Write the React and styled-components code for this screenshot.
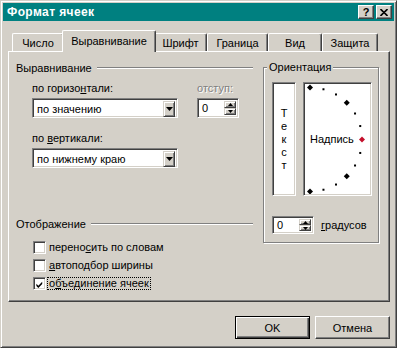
import styled, { createGlobalStyle } from "styled-components";

const GlobalStyle = createGlobalStyle`
  html, body {
    margin: 0;
    padding: 0;
    background: #d4d0c8;
  }
  body {
    font-family: "Liberation Sans", Arial, sans-serif;
    font-size: 11px;
    color: #000000;
  }
  * {
    box-sizing: border-box;
  }
`;

const Window = styled.div`
  width: 397px;
  height: 348px;
  background: #d4d0c8;
  border: 1px solid;
  border-color: #d4d0c8 #404040 #404040 #d4d0c8;
  box-shadow: inset 1px 1px #ffffff, inset -1px -1px #808080;
  padding: 2px;
  display: flex;
  flex-direction: column;
`;

const TitleBar = styled.div`
  height: 18px;
  background: #008080;
  display: flex;
  align-items: center;
  padding: 0 2px 0 4px;
`;

const TitleText = styled.span`
  color: #ffffff;
  font-weight: 700;
  font-size: 12px;
  letter-spacing: 0.4px;
`;

const TitleButtons = styled.div`
  margin-left: auto;
  display: flex;
  gap: 2px;
`;

const TitleButton = styled.div`
  width: 16px;
  height: 14px;
  background: #d4d0c8;
  border: 1px solid;
  border-color: #ffffff #404040 #404040 #ffffff;
  box-shadow: inset -1px -1px #808080;
  display: flex;
  align-items: center;
  justify-content: center;
  font-weight: 700;
  font-size: 11px;
  line-height: 1;
`;

const Body = styled.div`
  margin: 12px 4px 0 5px;
  display: flex;
  flex-direction: column;
`;

const TabStrip = styled.div`
  height: 18px;
  display: flex;
  align-items: flex-end;
  padding-left: 4px;
`;

const Tab = styled.div`
  position: relative;
  width: ${(p) => p.$w}px;
  height: ${(p) => (p.$active ? 22 : 18)}px;
  margin: ${(p) => (p.$active ? "0 -2px -1px -2px" : "0")};
  z-index: ${(p) => (p.$active ? 2 : 0)};
  background: #d4d0c8;
  border-top: 1px solid #ffffff;
  border-left: 1px solid #ffffff;
  border-right: 1px solid #404040;
  border-radius: 2px 2px 0 0;
  box-shadow: inset -1px 0 #808080;
  display: flex;
  align-items: center;
  justify-content: center;
  padding-bottom: ${(p) => (p.$active ? 2 : 0)}px;
  white-space: nowrap;
`;

const Panel = styled.div`
  position: relative;
  z-index: 1;
  height: 251px;
  border: 1px solid;
  border-color: #ffffff #404040 #404040 #ffffff;
  box-shadow: inset -1px -1px #808080;
  padding: 9px 0 0 7px;
  display: grid;
  grid-template-columns: 238px 116px;
  column-gap: 9px;
  align-items: start;
`;

const Column = styled.div`
  display: flex;
  flex-direction: column;
`;

const GroupHeader = styled.div`
  display: flex;
  align-items: center;
  height: 13px;
  margin-top: ${(p) => p.$top || 0}px;
`;

const HeaderLine = styled.div`
  flex: 1;
  margin-left: 5px;
  margin-right: 1px;
  height: 2px;
  border-top: 1px solid #808080;
  border-bottom: 1px solid #ffffff;
`;

const AlignGrid = styled.div`
  display: grid;
  grid-template-columns: 146px 42px;
  column-gap: 19px;
  row-gap: 14px;
  margin: 8px 0 0 16px;
`;

const Field = styled.div`
  display: flex;
  flex-direction: column;
  gap: 3px;
`;

const Label = styled.span`
  height: 13px;
  line-height: 13px;
  white-space: nowrap;
  color: ${(p) => (p.$disabled ? "#808080" : "#000000")};
  text-shadow: ${(p) => (p.$disabled ? "1px 1px #ffffff" : "none")};
`;

const Key = styled.span`
  text-decoration: underline;
`;

const Sunken = styled.div`
  position: relative;
  background: #ffffff;
  border: 1px solid;
  border-color: #808080 #ffffff #ffffff #808080;
  box-shadow: inset 1px 1px #404040, inset -1px -1px #d4d0c8;
`;

const Combo = styled(Sunken)`
  height: 20px;
  display: flex;
  padding: 2px;
`;

const ComboValue = styled.span`
  flex: 1;
  line-height: 16px;
  padding-left: 2px;
  white-space: nowrap;
`;

const Raised = styled.div`
  background: #d4d0c8;
  border: 1px solid;
  border-color: #d4d0c8 #404040 #404040 #d4d0c8;
  box-shadow: inset 1px 1px #ffffff, inset -1px -1px #808080;
  display: flex;
  align-items: center;
  justify-content: center;
`;

const DropButton = styled(Raised)`
  width: 12px;
  height: 16px;
`;

const Spin = styled(Sunken)`
  width: 42px;
  height: ${(p) => p.$h}px;
  display: flex;
  padding: 2px;
`;

const SpinValue = styled.span`
  flex: 1;
  padding-left: 2px;
  display: flex;
  align-items: center;
`;

const SpinButtons = styled.div`
  width: 12px;
  display: flex;
  flex-direction: column;
`;

const SpinHalf = styled(Raised)`
  flex: 1;
`;

const CheckList = styled.div`
  display: flex;
  flex-direction: column;
  margin: 8px 0 0 17px;
`;

const CheckRow = styled.div`
  height: 18px;
  display: flex;
  align-items: center;
  gap: 1px;
`;

const CheckBox = styled(Sunken)`
  width: 13px;
  height: 13px;
  padding: 2px;
  display: flex;
`;

const CheckLabel = styled.span`
  line-height: 11px;
  padding: 0 1px;
  border: 1px dotted ${(p) => (p.$focused ? "#000000" : "transparent")};
  white-space: nowrap;
`;

const Frame = styled.fieldset`
  margin: 0;
  padding: 0;
  min-width: 0;
  border: 1px solid #808080;
  box-shadow: inset 1px 1px #ffffff, 1px 1px #ffffff;
`;

const Legend = styled.legend`
  margin-left: 3px;
  padding: 0 2px;
  line-height: 13px;
  background: #d4d0c8;
`;

const FrameContent = styled.div`
  padding: 8px 6px 8px 8px;
  display: flex;
  flex-direction: column;
`;

const DialRow = styled.div`
  height: 114px;
  display: flex;
  gap: 7px;
`;

const VerticalBox = styled(Sunken)`
  width: 24px;
  display: flex;
  flex-direction: column;
  align-items: center;
  justify-content: center;
`;

const VLetter = styled.span`
  line-height: 13px;
`;

const DialBox = styled(Sunken)`
  width: 69px;
  display: flex;
  align-items: center;
  padding-left: 6px;
`;

const DialSvg = styled.svg`
  position: absolute;
  left: 1px;
  top: 1px;
`;

const DialText = styled.span`
  position: relative;
  white-space: nowrap;
`;

const DegreeRow = styled.div`
  margin-top: 20px;
  display: flex;
  align-items: center;
  gap: 7px;
`;

const Footer = styled.div`
  margin-top: 14px;
  display: flex;
  justify-content: flex-end;
  gap: 5px;
`;

const Button = styled.div`
  width: 75px;
  height: 23px;
  background: #d4d0c8;
  display: flex;
  align-items: center;
  justify-content: center;
  border: 1px solid;
  border-color: ${(p) => (p.$default ? "#000000" : "#ffffff #404040 #404040 #ffffff")};
  box-shadow: ${(p) =>
    p.$default
      ? "inset 1px 1px #ffffff, inset -1px -1px #404040, inset -2px -2px #808080"
      : "inset -1px -1px #808080"};
`;

const tabs = [
  { label: "Число", w: 52 },
  { label: "Выравнивание", w: 94, active: true },
  { label: "Шрифт", w: 53 },
  { label: "Граница", w: 61 },
  { label: "Вид", w: 54 },
  { label: "Защита", w: 56 },
];

function Arrow({ up }) {
  return (
    <svg width="5" height="3" viewBox="0 0 5 3">
      <path d={up ? "M2.5 0 L5 3 L0 3 Z" : "M0 0 L5 0 L2.5 3 Z"} fill="#000" />
    </svg>
  );
}

function DropArrow() {
  return (
    <svg width="7" height="4" viewBox="0 0 7 4">
      <path d="M0 0 L7 0 L3.5 4 Z" fill="#000" />
    </svg>
  );
}

function SpinBox({ h }) {
  return (
    <Spin $h={h}>
      <SpinValue>0</SpinValue>
      <SpinButtons>
        <SpinHalf>
          <Arrow up />
        </SpinHalf>
        <SpinHalf>
          <Arrow />
        </SpinHalf>
      </SpinButtons>
    </Spin>
  );
}

function Dial() {
  const cx = 5;
  const cy = 55.5;
  const r = 52;
  const marks = [];
  for (let a = 90; a >= -90; a -= 15) {
    const rad = (a * Math.PI) / 180;
    const x = cx + r * Math.cos(rad);
    const y = cy - r * Math.sin(rad);
    if (a % 45 === 0) {
      const d = 3;
      marks.push(
        <path
          key={a}
          d={`M${x} ${y - d} L${x + d} ${y} L${x} ${y + d} L${x - d} ${y} Z`}
          fill={a === 0 ? "#c4102c" : "#000"}
        />
      );
    } else {
      marks.push(<rect key={a} x={x - 1} y={y - 1} width="2" height="2" fill="#000" />);
    }
  }
  return (
    <DialSvg width="65" height="110" viewBox="0 0 65 110">
      {marks}
    </DialSvg>
  );
}

function Check() {
  return (
    <svg width="9" height="9" viewBox="0 0 9 9">
      <path d="M0.5 3.5 L3 6 L8 1 L8 4 L3 9 L0.5 6.5 Z" fill="#000" />
    </svg>
  );
}

export default function App() {
  return (
    <>
      <GlobalStyle />
      <Window>
        <TitleBar>
          <TitleText>Формат ячеек</TitleText>
          <TitleButtons>
            <TitleButton>?</TitleButton>
            <TitleButton>
              <svg width="8" height="7" viewBox="0 0 8 7">
                <path d="M0.5 0 L4 3.5 L7.5 0 M0.5 7 L4 3.5 L7.5 7" stroke="#000" strokeWidth="1.6" fill="none" />
              </svg>
            </TitleButton>
          </TitleButtons>
        </TitleBar>

        <Body>
          <TabStrip>
            {tabs.map((t) => (
              <Tab key={t.label} $w={t.w} $active={t.active}>
                {t.label}
              </Tab>
            ))}
          </TabStrip>

          <Panel>
            <Column>
              <GroupHeader>
                Выравнивание
                <HeaderLine />
              </GroupHeader>
              <AlignGrid>
                <Field>
                  <Label>
                    по горизо<Key>н</Key>тали:
                  </Label>
                  <Combo>
                    <ComboValue>по значению</ComboValue>
                    <DropButton>
                      <DropArrow />
                    </DropButton>
                  </Combo>
                </Field>
                <Field>
                  <Label $disabled>отступ:</Label>
                  <SpinBox h={20} />
                </Field>
                <Field>
                  <Label>
                    по <Key>в</Key>ертикали:
                  </Label>
                  <Combo>
                    <ComboValue>по нижнему краю</ComboValue>
                    <DropButton>
                      <DropArrow />
                    </DropButton>
                  </Combo>
                </Field>
              </AlignGrid>

              <GroupHeader $top={49}>
                Отображение
                <HeaderLine />
              </GroupHeader>
              <CheckList>
                <CheckRow>
                  <CheckBox />
                  <CheckLabel>
                    перено<Key>с</Key>ить по словам
                  </CheckLabel>
                </CheckRow>
                <CheckRow>
                  <CheckBox />
                  <CheckLabel>
                    <Key>а</Key>втоподбор ширины
                  </CheckLabel>
                </CheckRow>
                <CheckRow>
                  <CheckBox>
                    <Check />
                  </CheckBox>
                  <CheckLabel $focused>
                    о<Key>б</Key>ъединение ячеек
                  </CheckLabel>
                </CheckRow>
              </CheckList>
            </Column>

            <Frame>
              <Legend>Ориентация</Legend>
              <FrameContent>
                <DialRow>
                  <VerticalBox>
                    {"Текст".split("").map((ch, i) => (
                      <VLetter key={i}>{ch}</VLetter>
                    ))}
                  </VerticalBox>
                  <DialBox>
                    <Dial />
                    <DialText>Надпись</DialText>
                  </DialBox>
                </DialRow>
                <DegreeRow>
                  <SpinBox h={18} />
                  <Label>
                    <Key>г</Key>радусов
                  </Label>
                </DegreeRow>
              </FrameContent>
            </Frame>
          </Panel>

          <Footer>
            <Button $default>OK</Button>
            <Button>Отмена</Button>
          </Footer>
        </Body>
      </Window>
    </>
  );
}
